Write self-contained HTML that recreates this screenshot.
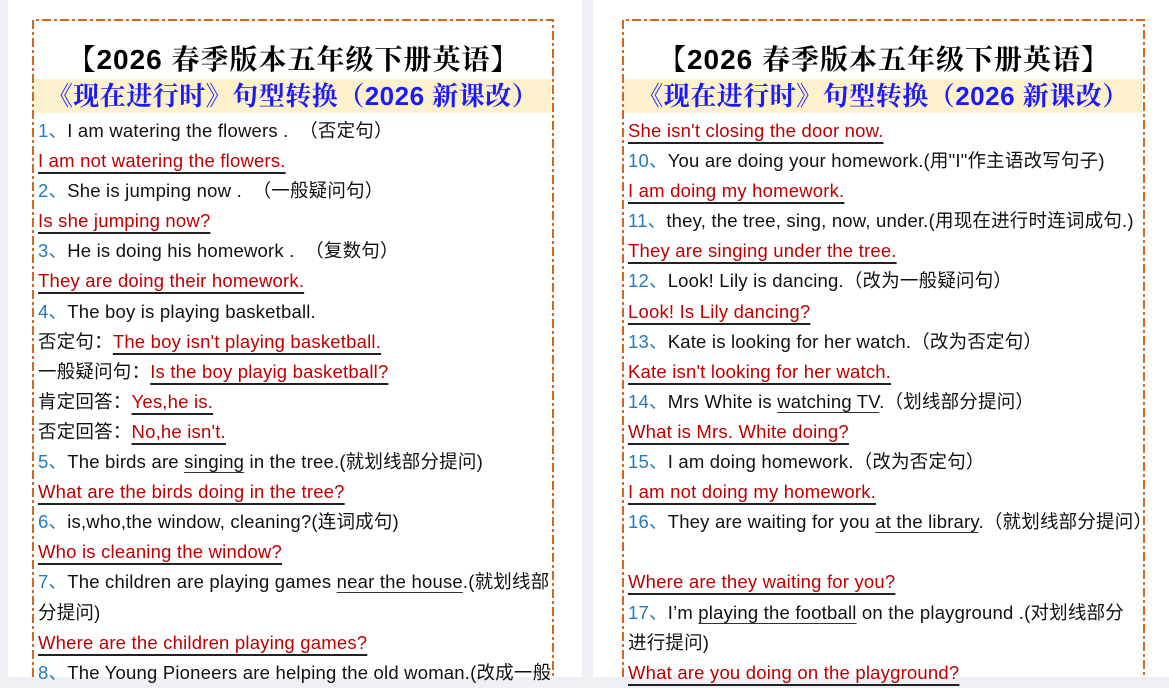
<!DOCTYPE html>
<html><head><meta charset="utf-8"><style>
*{margin:0;padding:0;box-sizing:border-box}
body{width:1169px;height:677px;overflow:hidden;background:#eef0f5;position:relative;font-family:"Liberation Sans","Noto Sans CJK SC",sans-serif;}
.page{position:absolute;top:0;height:677px;background:#fff}
.t1{position:absolute;font-family:"Liberation Sans","Noto Serif CJK SC",serif;font-weight:bold;font-size:28px;color:#000;text-align:center;white-space:nowrap;top:42px;letter-spacing:1px;line-height:36px}
.t2{position:absolute;top:79px;height:34px;background:#fdf0cc;font-family:"Liberation Sans","Noto Serif CJK SC",serif;font-weight:bold;font-size:26px;color:#1a1aff;text-align:center;white-space:nowrap;line-height:34px;letter-spacing:0.5px}
.lines{position:absolute;top:116px;font-size:18.5px;line-height:30.1px;color:#111;white-space:nowrap;letter-spacing:0.2px}
.n{color:#1f7bbf}
.r{color:#c00000;text-decoration:underline;text-decoration-color:#222;text-decoration-thickness:2px;text-underline-offset:5px}
.u{text-decoration:underline;text-decoration-color:#333;text-underline-offset:4px}
</style></head><body>
<div class="page" style="left:8px;width:574px"></div>
<div class="page" style="left:593px;width:576px"></div>
<svg style="position:absolute;left:0;top:0" width="1169" height="677">
<g fill="none" stroke="#d2691e" stroke-width="2" stroke-dasharray="9 3 3 3">
<path d="M33 677 V20 H553 V677"/>
<path d="M623 677 V20 H1144 V677"/>
</g></svg>
<div class="t1" style="left:34px;width:519px">【2026 春季版本五年级下册英语】</div>
<div class="t2" style="left:34px;width:517px">《现在进行时》句型转换（2026 新课改）</div>
<div class="t1" style="left:624px;width:520px">【2026 春季版本五年级下册英语】</div>
<div class="t2" style="left:624px;width:518px">《现在进行时》句型转换（2026 新课改）</div>
<div class="lines" style="left:38px">
<div><span class="n">1、</span>I am watering the flowers .&nbsp;&nbsp;（否定句）</div>
<div><span class="r">I am not watering the flowers.</span></div>
<div><span class="n">2、</span>She is jumping now .&nbsp;&nbsp;（一般疑问句）</div>
<div><span class="r">Is she jumping now?</span></div>
<div><span class="n">3、</span>He is doing his homework .&nbsp;&nbsp;（复数句）</div>
<div><span class="r">They are doing their homework.</span></div>
<div><span class="n">4、</span>The boy is playing basketball.</div>
<div>否定句：<span class="r">The boy isn't playing basketball.</span></div>
<div>一般疑问句：<span class="r">Is the boy playig basketball?</span></div>
<div>肯定回答：<span class="r">Yes,he is.</span></div>
<div>否定回答：<span class="r">No,he isn't.</span></div>
<div><span class="n">5、</span>The birds are <span class="u">singing</span> in the tree.(就划线部分提问)</div>
<div><span class="r">What are the birds doing in the tree?</span></div>
<div><span class="n">6、</span>is,who,the window, cleaning?(连词成句)</div>
<div><span class="r">Who is cleaning the window?</span></div>
<div><span class="n">7、</span>The children are playing games <span class="u">near the house</span>.(就划线部</div>
<div>分提问)</div>
<div><span class="r">Where are the children playing games?</span></div>
<div><span class="n">8、</span>The Young Pioneers are helping the old woman.(改成一般</div>
</div>
<div class="lines" style="left:628px">
<div><span class="r">She isn't closing the door now.</span></div>
<div><span class="n">10、</span>You are doing your homework.(用"I"作主语改写句子)</div>
<div><span class="r">I am doing my homework.</span></div>
<div><span class="n">11、</span>they, the tree, sing, now, under.(用现在进行时连词成句.)</div>
<div><span class="r">They are singing under the tree.</span></div>
<div><span class="n">12、</span>Look! Lily is dancing.（改为一般疑问句）</div>
<div><span class="r">Look! Is Lily dancing?</span></div>
<div><span class="n">13、</span>Kate is looking for her watch.（改为否定句）</div>
<div><span class="r">Kate isn't looking for her watch.</span></div>
<div><span class="n">14、</span>Mrs White is <span class="u">watching TV</span>.（划线部分提问）</div>
<div><span class="r">What is Mrs. White doing?</span></div>
<div><span class="n">15、</span>I am doing homework.（改为否定句）</div>
<div><span class="r">I am not doing my homework.</span></div>
<div><span class="n">16、</span>They are waiting for you <span class="u">at the library</span>.（就划线部分提问）</div>
<div>&nbsp;</div>
<div><span class="r">Where are they waiting for you?</span></div>
<div><span class="n">17、</span>I’m <span class="u">playing the football</span> on the playground .(对划线部分</div>
<div>进行提问)</div>
<div><span class="r">What are you doing on the playground?</span></div>
</div>
</body></html>
